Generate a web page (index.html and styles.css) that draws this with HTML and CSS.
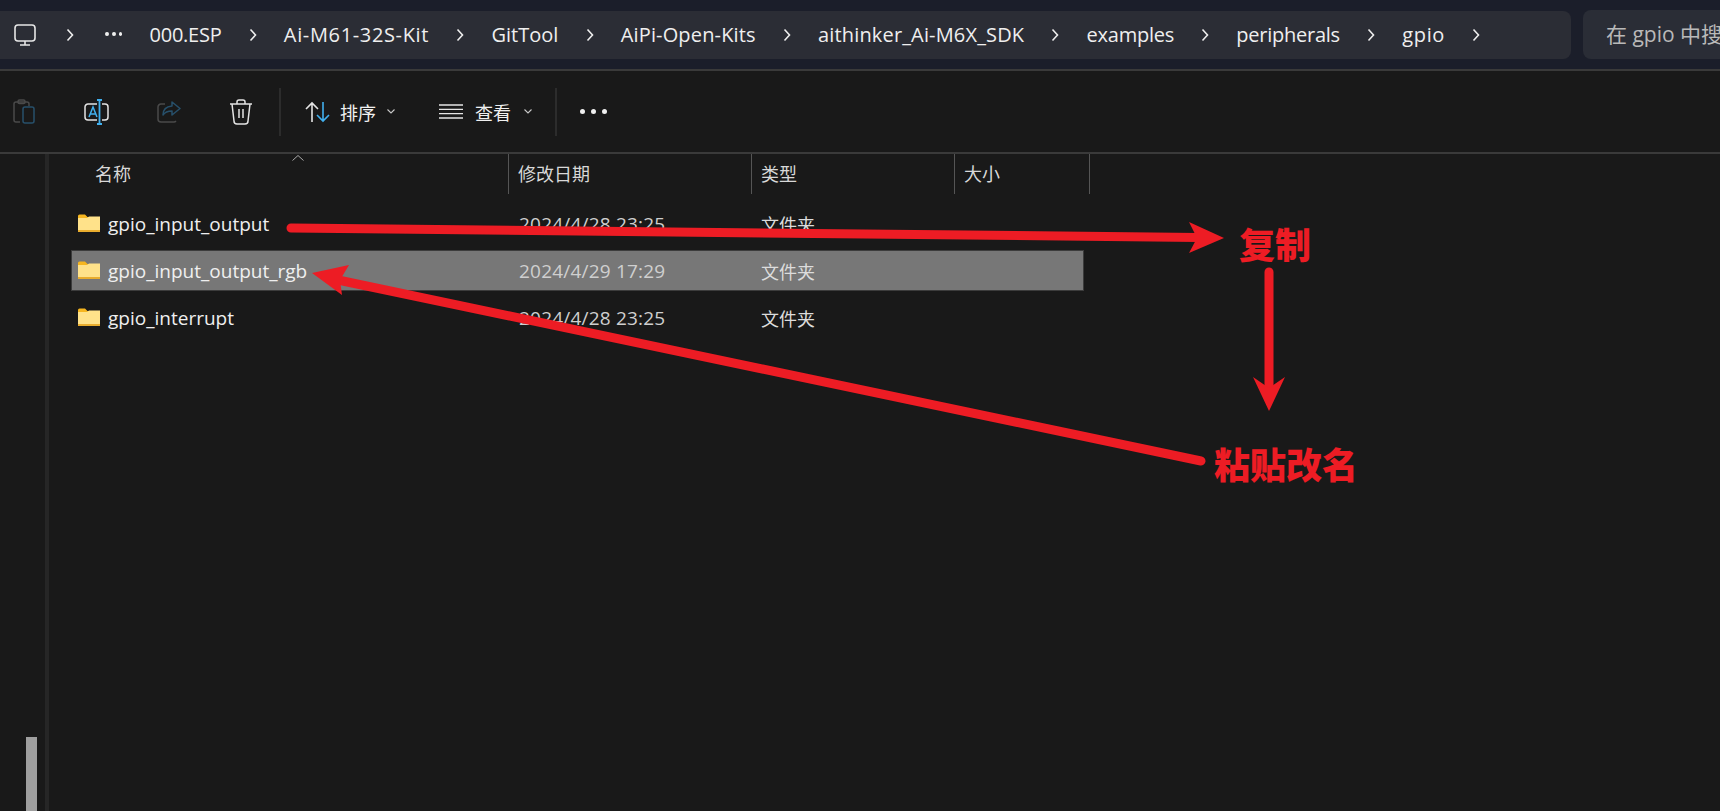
FILE: index.html
```html
<!DOCTYPE html>
<html lang="zh-CN">
<head>
<meta charset="utf-8">
<title>gpio</title>
<link rel="stylesheet" href="styles.css">
</head>
<body>
<div class="app">
  <header class="topbar">
    <nav class="crumbs">
      <svg class="ic-pc" width="22" height="22" viewBox="0 0 22 22" fill="none" stroke="#e6e6e6" stroke-width="1.6"><rect x="1" y="1" width="20" height="16" rx="3"/><path d="M6 21h10M11 17v4" /></svg>
      <svg class="chev" width="8" height="14" viewBox="0 0 8 14"><path d="M1.5 1.5 6.5 7l-5 5.500" fill="none" stroke="#eee" stroke-width="1.600"/></svg>
      <span class="dots"><i></i><i></i><i></i></span>
      <span class="crumb crumb-tight">000.ESP</span>
      <svg class="chev" width="8" height="14" viewBox="0 0 8 14"><path d="M1.5 1.5 6.5 7l-5 5.500" fill="none" stroke="#eee" stroke-width="1.600"/></svg>
      <span class="crumb crumb-wide">Ai-M61-32S-Kit</span>
      <svg class="chev" width="8" height="14" viewBox="0 0 8 14"><path d="M1.5 1.5 6.5 7l-5 5.500" fill="none" stroke="#eee" stroke-width="1.600"/></svg>
      <span class="crumb">GitTool</span>
      <svg class="chev" width="8" height="14" viewBox="0 0 8 14"><path d="M1.5 1.5 6.5 7l-5 5.500" fill="none" stroke="#eee" stroke-width="1.600"/></svg>
      <span class="crumb crumb-loose">AiPi-Open-Kits</span>
      <svg class="chev" width="8" height="14" viewBox="0 0 8 14"><path d="M1.5 1.5 6.5 7l-5 5.500" fill="none" stroke="#eee" stroke-width="1.600"/></svg>
      <span class="crumb crumb-loose">aithinker_Ai-M6X_SDK</span>
      <svg class="chev" width="8" height="14" viewBox="0 0 8 14"><path d="M1.5 1.5 6.5 7l-5 5.500" fill="none" stroke="#eee" stroke-width="1.600"/></svg>
      <span class="crumb crumb-tight">examples</span>
      <svg class="chev" width="8" height="14" viewBox="0 0 8 14"><path d="M1.5 1.5 6.5 7l-5 5.500" fill="none" stroke="#eee" stroke-width="1.600"/></svg>
      <span class="crumb crumb-tight">peripherals</span>
      <svg class="chev" width="8" height="14" viewBox="0 0 8 14"><path d="M1.5 1.5 6.5 7l-5 5.500" fill="none" stroke="#eee" stroke-width="1.600"/></svg>
      <span class="crumb crumb-wide">gpio</span>
      <svg class="chev" width="8" height="14" viewBox="0 0 8 14"><path d="M1.5 1.5 6.5 7l-5 5.500" fill="none" stroke="#eee" stroke-width="1.600"/></svg>
    </nav>
    <div class="search">在 gpio 中搜索</div>
  </header>

  <section class="toolbar">
    <button class="tool tool-paste">
      <svg width="22" height="25" viewBox="0 0 22 25" fill="none" stroke-width="1.500"><path d="M7 23H3a2 2 0 0 1-2-2V5a2 2 0 0 1 2-2h11a2 2 0 0 1 2 2v2" stroke="#4a4a4a"/><rect x="5" y="1" width="7" height="3.500" rx="1.500" stroke="#4a4a4a"/><rect x="10" y="8" width="11" height="16" rx="2" stroke="#27506b"/></svg>
    </button>
    <button class="tool tool-rename">
      <svg width="25" height="26" viewBox="0 0 25 26" fill="none" stroke-width="1.500"><path d="M13 5H4a3 3 0 0 0-3 3v10a3 3 0 0 0 3 3h9M18 5h3a3 3 0 0 1 3 3v10a3 3 0 0 1-3 3h-3" stroke="#e4e4e4"/><path d="M5 18 9 8l4 10M6.300 15h5.400" stroke="#41b0ee"/><path d="M13 1h5M13 25h5M15.500 1v24" stroke="#41b0ee" stroke-width="1.800"/></svg>
    </button>
    <button class="tool tool-share">
      <svg width="24" height="22" viewBox="0 0 24 22" fill="none" stroke-width="1.500"><path d="M8 3H4a3 3 0 0 0-3 3v12a3 3 0 0 0 3 3h13a3 3 0 0 0 2-1" stroke="#4a4a4a"/><path d="M15 1l8 6.500-8 6.500v-4c-4 0-7 1-9 4 0-5 3-8.500 9-9z" stroke="#27506b" stroke-linejoin="round"/></svg>
    </button>
    <button class="tool tool-trash">
      <svg width="24" height="26" viewBox="0 0 24 26" fill="none" stroke="#e4e4e4" stroke-width="1.500" stroke-linejoin="round"><path d="M1 5h22M8 5V3a2 2 0 0 1 2-2h4a2 2 0 0 1 2 2v2M3 5l2 17a3 3 0 0 0 3 3h8a3 3 0 0 0 3-3l2-17M10 10v9M14 10v9"/></svg>
    </button>
    <span class="sep sep-a"></span>
    <button class="menu menu-sort">
      <svg width="25" height="22" viewBox="0 0 25 22" fill="none" stroke-width="1.600"><path d="M7 21V2M1 8l6-6 6 6" stroke="#e4e4e4"/><path d="M18 1v19M12 14l6 6 6-6" stroke="#41b0ee"/></svg>
      <span>排序</span>
      <svg class="caret" width="8" height="5" viewBox="0 0 8 5"><path d="M.5.500 4 4l3.500-3.500" fill="none" stroke="#c8c8c8" stroke-width="1.100"/></svg>
    </button>
    <button class="menu menu-view">
      <svg width="24" height="15" viewBox="0 0 24 15" fill="none" stroke="#e4e4e4" stroke-width="1.300"><path d="M0 1h24M0 5.300h24M0 9.600h24M0 14h24"/></svg>
      <span>查看</span>
      <svg class="caret" width="8" height="5" viewBox="0 0 8 5"><path d="M.5.500 4 4l3.500-3.500" fill="none" stroke="#c8c8c8" stroke-width="1.100"/></svg>
    </button>
    <span class="sep sep-b"></span>
    <span class="more"><i></i><i></i><i></i></span>
  </section>

  <main class="content">
    <aside class="nav"><div class="thumb"></div></aside>
    <div class="split"></div>
    <div class="list">
      <div class="thead">
        <div class="th th-name">名称<svg class="sort" width="12" height="6" viewBox="0 0 12 6"><path d="M.5 5.500 6 .5l5.500 5" fill="none" stroke="#aaa" stroke-width="1"/></svg></div>
        <div class="th">修改日期</div>
        <div class="th">类型</div>
        <div class="th">大小</div>
      </div>
      <div class="rows">
        <div class="row">
          <div class="name"><svg class="folder" width="22" height="18" viewBox="0 0 22 18"><path d="M0 2a1.500 1.500 0 0 1 1.500-1.500h5.500l2.500 2.500H22v3H0z" fill="#f6b620"/><path d="M0 4h9l2-1.500h11V18H0z" fill="#ffe28a"/><path d="M0 16h22v2H0z" fill="#e9ad2e"/></svg>gpio_input_output</div>
          <div class="date">2024/4/28 23:25</div>
          <div class="type">文件夹</div>
        </div>
        <div class="row selected">
          <div class="name"><svg class="folder" width="22" height="18" viewBox="0 0 22 18"><path d="M0 2a1.500 1.500 0 0 1 1.500-1.500h5.500l2.500 2.500H22v3H0z" fill="#f6b620"/><path d="M0 4h9l2-1.500h11V18H0z" fill="#ffe28a"/><path d="M0 16h22v2H0z" fill="#e9ad2e"/></svg>gpio_input_output_rgb</div>
          <div class="date">2024/4/29 17:29</div>
          <div class="type">文件夹</div>
        </div>
        <div class="row">
          <div class="name"><svg class="folder" width="22" height="18" viewBox="0 0 22 18"><path d="M0 2a1.500 1.500 0 0 1 1.500-1.500h5.500l2.500 2.500H22v3H0z" fill="#f6b620"/><path d="M0 4h9l2-1.500h11V18H0z" fill="#ffe28a"/><path d="M0 16h22v2H0z" fill="#e9ad2e"/></svg>gpio_interrupt</div>
          <div class="date">2024/4/28 23:25</div>
          <div class="type">文件夹</div>
        </div>
      </div>
    </div>
  </main>

  <svg class="marks" width="1720" height="811" viewBox="0 0 1720 811" fill="none">
    <path d="M291 228 1198 237.500" stroke="#ed1c24" stroke-width="9" stroke-linecap="round"/>
    <path d="M1224 238 1189 222 1197 238 1189 253z" fill="#ed1c24"/>
    <path d="M1269 272V385" stroke="#ed1c24" stroke-width="9" stroke-linecap="round"/>
    <path d="M1269 411 1253 377 1269 388 1285 377z" fill="#ed1c24"/>
    <path d="M1201 461 338 280" stroke="#ed1c24" stroke-width="9" stroke-linecap="round"/>
    <path d="M312 273 349 265 340 280 342 295z" fill="#ed1c24"/>
  </svg>
  <div class="label label-copy">复制</div>
  <div class="label label-paste">粘贴改名</div>
</div>
</body>
</html>
```

FILE: styles.css
```css
* { box-sizing: border-box; }
html, body { margin: 0; padding: 0; }
body {
  width: 1720px;
  height: 811px;
  overflow: hidden;
  background: #191919;
  font-family: "Open Sans", "Noto Sans CJK SC", sans-serif;
  color: #e6e6e6;
}
.app { position: relative; width: 1720px; height: 811px; display: flex; flex-direction: column; }

.topbar {
  height: 71px;
  padding: 11px 0 10px;
  display: flex;
  gap: 12px;
  background: #1b1e2a;
  border-bottom: 2px solid #3a3a3a;
}
.crumbs {
  width: 1571px;
  height: 48px;
  flex: none;
  display: flex;
  align-items: center;
  gap: 27.200px;
  padding-left: 14px;
  background: #2b2d35;
  border-radius: 0 8px 8px 0;
}
.crumb { font-size: 20px; line-height: 26px; color: #efefef; white-space: nowrap; }
.crumb-tight { letter-spacing: -.25px; }
.crumb-loose { letter-spacing: .15px; }
.crumb-wide { letter-spacing: .65px; }
.chev { flex: none; }
.ic-pc + .chev { margin-left: 3px; }
.dots { display: flex; gap: 3px; width: 17px; margin: 0 0 2px 4px; }
.dots i { width: 4px; height: 4px; border-radius: 50%; background: #eee; }
.search {
  flex: 1;
  height: 49px;
  margin-top: -1px;
  padding-left: 23px;
  background: #2a2d36;
  border-radius: 8px 0 0 8px;
  font-size: 21px;
  line-height: 48px;
  color: #b9b9b9;
  white-space: nowrap;
  overflow: hidden;
}

.toolbar {
  height: 83px;
  flex: none;
  display: flex;
  align-items: center;
  background: #191919;
  border-bottom: 2px solid #3a3a3a;
  padding: 0 0 0 13px;
}
.tool, .menu {
  padding: 0;
  border: 0;
  background: none;
  color: inherit;
  font: inherit;
  display: flex;
  align-items: center;
}
.tool svg { display: block; }
.tool-paste { width: 71px; }
.tool-rename { width: 73px; }
.tool-share { width: 72px; }
.tool-trash { width: 50px; }
.sep { width: 2px; height: 48px; background: #2c2c2c; flex: none; }
.menu { font-size: 18px; color: #f0f0f0; }
.menu-sort { margin-left: 24px; gap: 10px; width: 134px; }
.menu-view { gap: 12px; width: 116px; }
.caret { margin-left: 1px; }
.more { display: flex; gap: 6px; margin-left: 23px; }
.more i { width: 5px; height: 5px; border-radius: 50%; background: #f0f0f0; }

.content { flex: 1; display: flex; min-height: 0; }
.nav { width: 45px; flex: none; display: flex; align-items: flex-end; padding-left: 26px; }
.thumb { width: 11px; height: 74px; background: #9f9f9f; }
.split { width: 4px; flex: none; background: #262626; }
.list { flex: 1; display: flex; flex-direction: column; }

.thead { height: 40px; display: grid; grid-template-columns: 460px 243px 203px 135px; }
.th {
  position: relative;
  border-right: 1px solid #555;
  padding: 0 0 0 9px;
  font-size: 18px;
  line-height: 40px;
  color: #d8d8d8;
}
.th-name { padding-left: 46px; }
.sort { position: absolute; left: 243px; top: 1px; }

.rows { padding: 9px 0 0 22px; display: flex; flex-direction: column; gap: 6px; }
.row {
  width: 1013px;
  height: 41px;
  display: grid;
  grid-template-columns: 438px 242px 1fr;
  align-items: center;
  font-size: 18px;
  color: #dcdcdc;
  border: 1px solid transparent;
}
.row.selected { background: #777; border-color: #3c3c3c; }
.name { display: flex; align-items: center; gap: 8px; padding-left: 6px; font-size: 19px; color: #efefef; }
.folder { flex: none; margin-top: -1px; }
.date { padding-left: 9px; font-size: 19px; letter-spacing: .2px; color: #cfcfcf; }
.type { padding-left: 9px; }

.marks { position: absolute; left: 0; top: 0; pointer-events: none; }
.label {
  position: absolute;
  font-family: "Noto Sans CJK SC", sans-serif;
  font-weight: 900;
  font-size: 36px;
  line-height: 44px;
  color: #ed1c24;
  white-space: nowrap;
}
.label-copy { left: 1239px; top: 221px; }
.label-paste { left: 1214px; top: 441px; }
```
